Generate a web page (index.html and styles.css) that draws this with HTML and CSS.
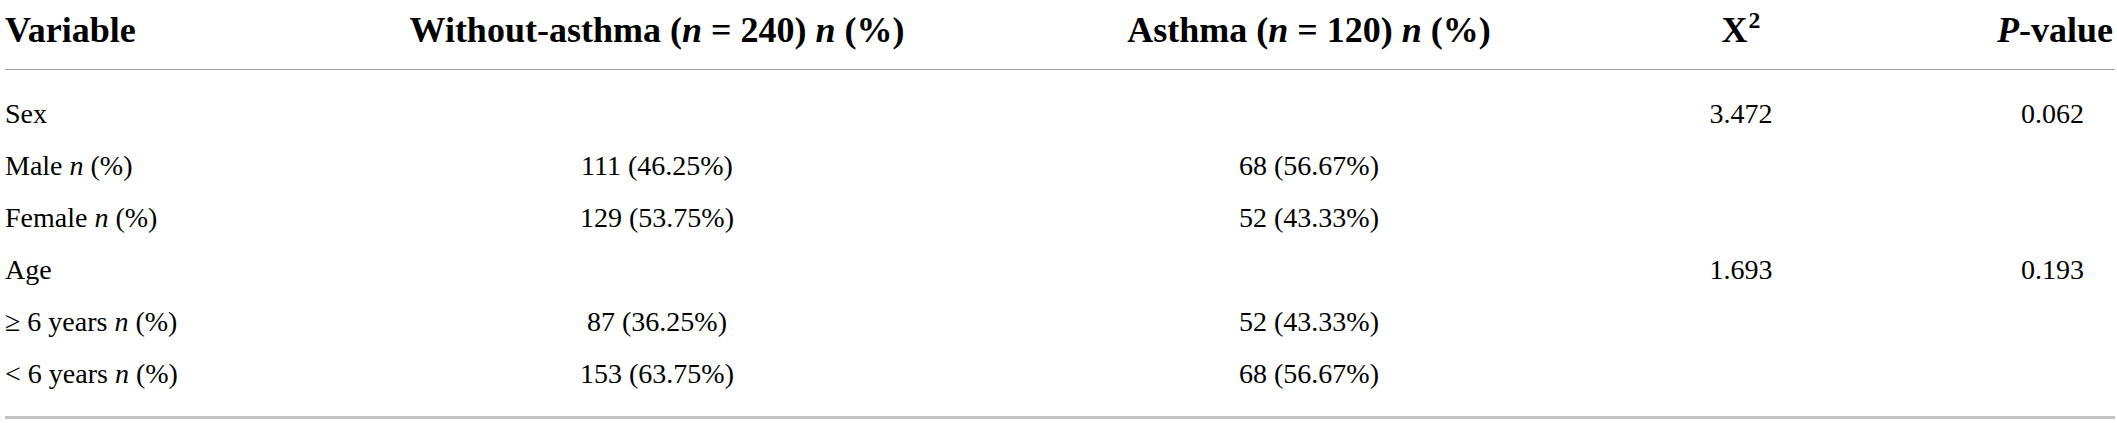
FILE: index.html
```html
<!DOCTYPE html>
<html lang="en">
<head>
<meta charset="utf-8">
<title>Table</title>
<link rel="stylesheet" href="styles.css">
</head>
<body>
<table class="data-table">
  <colgroup>
    <col class="col-var">
    <col class="col-without">
    <col class="col-asthma">
    <col class="col-chi">
    <col class="col-p">
  </colgroup>
  <thead>
    <tr>
      <th class="left">Variable</th>
      <th>Without-asthma (<i>n</i> = 240) <i>n</i> (%)</th>
      <th>Asthma (<i>n</i> = 120) <i>n</i> (%)</th>
      <th>X<sup>2</sup></th>
      <th class="p-head"><i>P</i>-value</th>
    </tr>
  </thead>
  <tbody>
    <tr class="first">
      <td class="left">Sex</td>
      <td></td>
      <td></td>
      <td>3.472</td>
      <td>0.062</td>
    </tr>
    <tr>
      <td class="left">Male <i>n</i> (%)</td>
      <td>111 (46.25%)</td>
      <td>68 (56.67%)</td>
      <td></td>
      <td></td>
    </tr>
    <tr>
      <td class="left">Female <i>n</i> (%)</td>
      <td>129 (53.75%)</td>
      <td>52 (43.33%)</td>
      <td></td>
      <td></td>
    </tr>
    <tr>
      <td class="left">Age</td>
      <td></td>
      <td></td>
      <td>1.693</td>
      <td>0.193</td>
    </tr>
    <tr>
      <td class="left">&ge; 6 years <i>n</i> (%)</td>
      <td>87 (36.25%)</td>
      <td>52 (43.33%)</td>
      <td></td>
      <td></td>
    </tr>
    <tr class="last">
      <td class="left">&lt; 6 years <i>n</i> (%)</td>
      <td>153 (63.75%)</td>
      <td>68 (56.67%)</td>
      <td></td>
      <td></td>
    </tr>
  </tbody>
</table>
</body>
</html>
```

FILE: styles.css
```css
html, body {
  margin: 0;
  padding: 0;
  background: #ffffff;
}

body {
  font-family: "Liberation Serif", "Times New Roman", serif;
  color: #000000;
}

.data-table {
  margin-left: 5px;
  width: 2110px;
  border-collapse: collapse;
  table-layout: fixed;
}

.col-var { width: 183px; }
.col-without { width: 938px; }
.col-asthma { width: 366px; }
.col-chi { width: 498px; }
.col-p { width: 125px; }

.data-table th {
  font-size: 36px;
  font-weight: bold;
  line-height: 50px;
  padding: 5px 0 14px;
  text-align: center;
  white-space: nowrap;
  border-bottom: 1px solid #a3a3a3;
}

.data-table th.p-head {
  text-align: right;
  padding-right: 2px;
}

.data-table th sup {
  font-size: 0.66em;
  line-height: 0;
  vertical-align: 0.6em;
  margin-left: 1px;
}

.data-table td {
  font-size: 28px;
  line-height: 34px;
  padding: 9px 0;
  text-align: center;
  white-space: nowrap;
}

.data-table .left {
  text-align: left;
}

.data-table tr.first td {
  padding-top: 27px;
}

.data-table tr.last td {
  padding-bottom: 25px;
  border-bottom: 3px solid #c2c2c2;
}
```
